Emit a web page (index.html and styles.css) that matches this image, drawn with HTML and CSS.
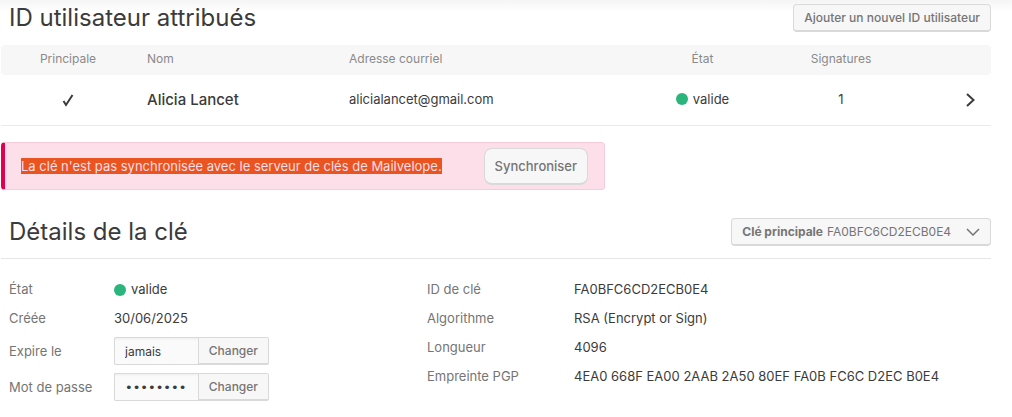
FILE: index.html
```html
<!DOCTYPE html>
<html lang="fr">
<head>
<meta charset="utf-8">
<title>Détails de la clé</title>
<link rel="stylesheet" href="styles.css">
</head>
<body>
<main class="page">
  <section>
    <header class="section-head">
      <h2 class="title">ID utilisateur attribués</h2>
      <button class="btn" type="button">Ajouter un nouvel ID utilisateur</button>
    </header>
    <table class="users">
      <colgroup><col class="c-main"><col class="c-name"><col class="c-mail"><col class="c-state"><col class="c-sign"><col></colgroup>
      <thead>
        <tr><th class="center">Principale</th><th>Nom</th><th>Adresse courriel</th><th class="center">État</th><th class="center">Signatures</th><th></th></tr>
      </thead>
      <tbody>
        <tr>
          <td class="center icon"><svg class="check" viewBox="0 0 12 14" role="img" aria-label="Oui"><path d="M1.500 8 4 12 10.500 2"/></svg></td>
          <td class="name">Alicia Lancet</td>
          <td>alicialancet@gmail.com</td>
          <td class="center"><span class="state">valide</span></td>
          <td class="center">1</td>
          <td class="icon go"><svg class="arrow" viewBox="0 0 9 14" aria-hidden="true"><path d="M1 1 7.500 7 1 13"/></svg></td>
        </tr>
      </tbody>
    </table>
  </section>

  <div class="alert" role="alert">
    <span class="alert-text"><mark>La clé n'est pas synchronisée avec le serveur de clés de Mailvelope.</mark></span>
    <button class="btn btn-sync" type="button">Synchroniser</button>
  </div>

  <section>
    <header class="section-head ruled">
      <h2 class="title">Détails de la clé</h2>
      <div class="btn picker">
        <label class="picker-label" for="key">Clé principale</label>
        <select class="picker-select" id="key"><option>FA0BFC6CD2ECB0E4</option></select>
        <svg class="chevron" viewBox="0 0 14 8" aria-hidden="true"><path d="M1 1 7 7 13 1"/></svg>
      </div>
    </header>
    <div class="details">
      <div class="list list-main">
        <span class="key">État</span><span class="state">valide</span>
        <span class="key">Créée</span><span>30/06/2025</span>
        <label class="key" for="expires">Expire le</label>
        <div class="group"><input class="field" id="expires" type="text" value="jamais" readonly><button class="group-btn" type="button">Changer</button></div>
        <label class="key" for="password">Mot de passe</label>
        <div class="group"><input class="field field-dots" id="password" type="text" value="••••••••" readonly><button class="group-btn" type="button">Changer</button></div>
      </div>
      <div class="list list-info">
        <span class="key">ID de clé</span><span>FA0BFC6CD2ECB0E4</span>
        <span class="key">Algorithme</span><span>RSA (Encrypt or Sign)</span>
        <span class="key">Longueur</span><span>4096</span>
        <span class="key">Empreinte PGP</span><span>4EA0 668F EA00 2AAB 2A50 80EF FA0B FC6C D2EC B0E4</span>
      </div>
    </div>
  </section>
</main>
</body>
</html>
```
FILE: styles.css
```css
* { box-sizing: border-box; }
body {
  margin: 0;
  background: linear-gradient(#f5f5f5, #fff 12px) no-repeat #fff;
  color: #3b3b3b;
  font: 13px/21px Inter, "Open Sans", sans-serif;
}
button, input, select { font: inherit; color: inherit; margin: 0; }
svg { display: block; fill: none; stroke: currentColor; }
.page { padding: 4px 21px 14px 1px; }
.section-head { display: flex; justify-content: space-between; align-items: center; height: 28px; padding-left: 8px; }
.title { margin: 0; font-size: 24px; line-height: 28px; font-weight: 400; color: #3b3b3b; }
.btn {
  height: 28px;
  padding: 0 10px;
  border: 1px solid #d9d9d9;
  border-bottom-width: 2px;
  border-radius: 4px;
  background: #f7f7f7;
  color: #757575;
  font-size: 12px;
  line-height: 16px;
  font-weight: 500;
}
.users { width: 100%; margin-top: 13px; table-layout: fixed; border-collapse: separate; border-spacing: 0; }
.c-main { width: 134px; }
.c-name { width: 202px; }
.c-mail { width: 291px; }
.c-state { width: 149px; }
.c-sign { width: 128px; }
.users th { height: 30px; padding: 0 0 2px 12px; background: #f7f7f7; color: #8a8a8a; font-size: 12px; line-height: 16px; font-weight: 400; text-align: left; }
.users th:first-child { border-radius: 4px 0 0 4px; }
.users th:last-child { border-radius: 0 4px 4px 0; }
.users td { height: 51px; padding: 0 0 2px 12px; border-bottom: 1px solid #ebebeb; }
.users .center { padding-left: 0; text-align: center; }
.users .icon { padding-bottom: 0; }
.users .name { font-size: 15px; font-weight: 500; }
.users .go { padding-right: 16px; }
.check { width: 12px; height: 14px; margin: 0 auto; stroke-width: 2; }
.arrow { width: 9px; height: 14px; margin-left: auto; stroke-width: 2; }
.state { display: inline-flex; align-items: center; gap: 5px; vertical-align: middle; }
.state::before { content: ""; width: 12px; height: 12px; border-radius: 50%; background: #2bb57c; }
.alert {
  display: flex;
  align-items: center;
  justify-content: space-between;
  width: fit-content;
  min-width: 604px;
  height: 48px;
  margin: 16px 0 28px;
  padding: 0 16px;
  border: 1px solid #f7cbd9;
  border-left: 4px solid #e3004f;
  border-radius: 4px;
  background: #fcdfe8;
}
.alert mark { background: #e95420; color: #fcdfe8; }
.btn-sync { height: 37px; border-radius: 8px; font-size: 13px; }
.ruled { height: 41px; padding-bottom: 12px; border-bottom: 1px solid #e6e6e6; }
.picker { display: flex; align-items: center; gap: 4px; }
.picker-label { font-weight: 700; }
.picker-select { appearance: none; padding: 0; border: 0; background: none; font-weight: 400; }
.chevron { width: 14px; height: 8px; margin-left: 10px; stroke-width: 1.500; }
.details { display: grid; grid-template-columns: 418px 1fr; padding: 20px 0 0 8px; }
.list { display: grid; align-content: start; align-items: center; row-gap: 8px; }
.list-main { grid-template-columns: 105px auto; justify-content: start; }
.list-info { grid-template-columns: 147px 1fr; }
.key { color: #757575; }
.group { display: flex; width: 155px; height: 28px; }
.field { flex: 1; min-width: 0; padding: 0 10px; border: 1px solid #d9d9d9; border-right: 0; border-radius: 2px 0 0 2px; background: linear-gradient(#f0f0f0, #fafafa 3px); font-size: 12px; }
.field-dots { font-family: "DejaVu Sans", sans-serif; font-size: 13px; }
.group-btn { padding: 0 10px; border: 1px solid #d9d9d9; border-bottom-width: 2px; border-radius: 0 2px 2px 0; background: #f7f7f7; color: #757575; font-size: 12px; line-height: 16px; font-weight: 500; }
```
